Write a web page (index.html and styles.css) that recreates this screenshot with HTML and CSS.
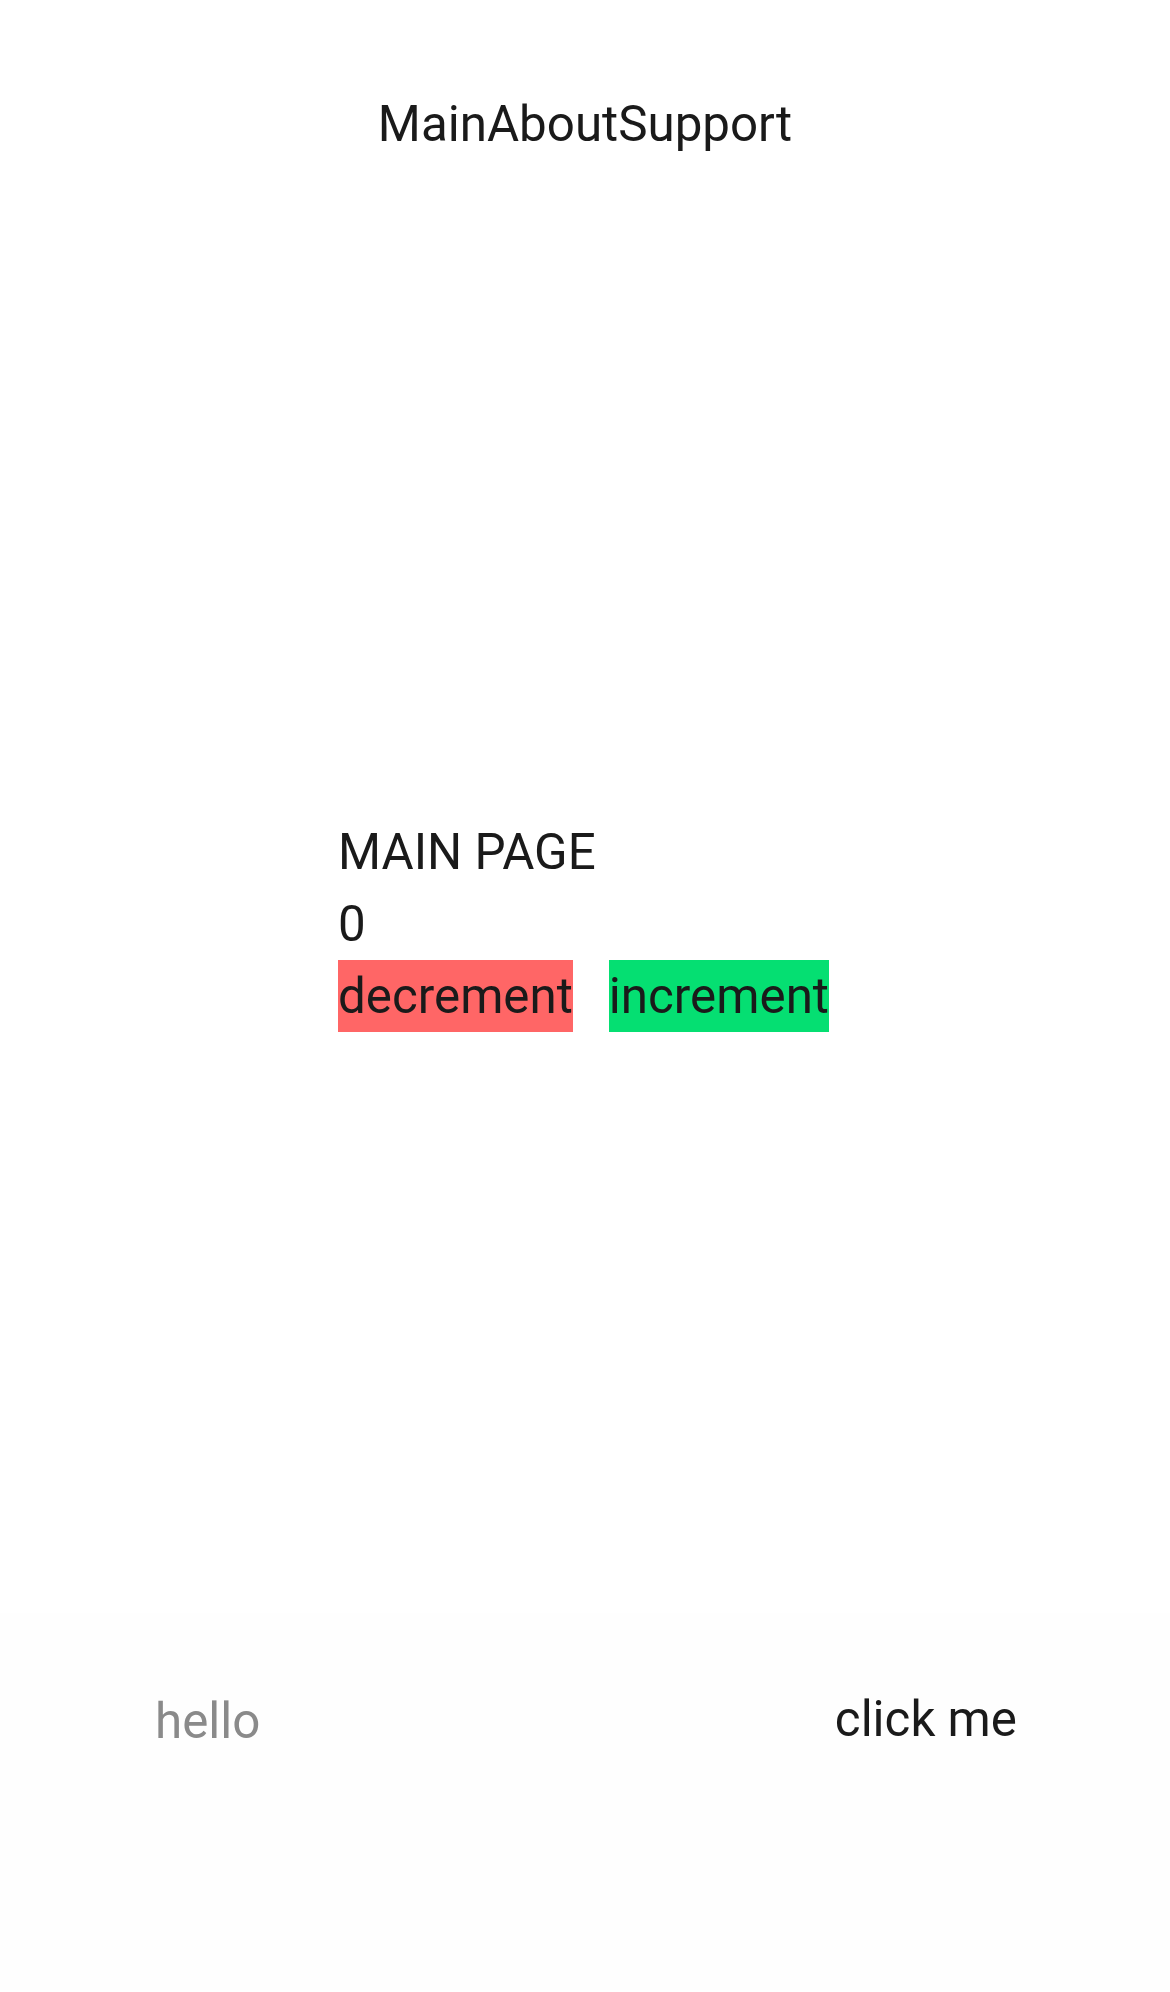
FILE: index.html
```html
<!DOCTYPE html>
<html lang="en">
<head>
<meta charset="utf-8">
<title>Main</title>
<link rel="stylesheet" href="styles.css">
</head>
<body>
<nav class="nav">
  <a class="nav-link" href="#">Main</a><a class="nav-link" href="#">About</a><a class="nav-link" href="#">Support</a>
</nav>
<main class="main">
  <div class="counter">
    <h1 class="title">MAIN PAGE</h1>
    <div class="count">0</div>
    <div class="actions">
      <button class="btn btn-dec" type="button">decrement</button>
      <button class="btn btn-inc" type="button">increment</button>
    </div>
  </div>
</main>
<footer class="footer">
  <input class="field" type="text" placeholder="hello">
  <button class="link-btn" type="button">click me</button>
</footer>
</body>
</html>
```

FILE: styles.css
```css
html, body {
  margin: 0;
  padding: 0;
  background: #ffffff;
}
body {
  font-family: Roboto, "Liberation Sans", Arial, sans-serif;
  font-size: 49.3px;
  line-height: 72px;
  color: #1a1a1a;
}
.nav {
  display: flex;
  justify-content: center;
  padding-top: 88px;
}
.nav-link {
  color: #1a1a1a;
  text-decoration: none;
}
.main {
  padding: 656px 0 581px 338px;
}
.title {
  margin: 0;
  font-size: inherit;
  font-weight: 400;
  line-height: 72px;
}
.count {
  line-height: 72px;
}
.actions {
  display: flex;
  gap: 36px;
}
.btn {
  font: inherit;
  line-height: 72px;
  color: #1a1a1a;
  border: 0;
  padding: 0;
  margin: 0;
  height: 72px;
}
.btn-dec { background: #ff6666; }
.btn-inc { background: #05df72; }
.footer {
  background: #fefefe;
  height: 377px;
  box-sizing: border-box;
  padding: 70px 153px 0 155px;
  display: flex;
  justify-content: space-between;
  align-items: flex-start;
}
.field {
  font: inherit;
  line-height: 72px;
  height: 72px;
  margin-top: 2px;
  border: 0;
  padding: 0;
  background: transparent;
  width: 400px;
  color: #1a1a1a;
  outline: none;
}
.field::placeholder {
  color: #8a8a8a;
}
.link-btn {
  font: inherit;
  line-height: 72px;
  height: 72px;
  border: 0;
  padding: 0;
  background: transparent;
  color: #1a1a1a;
}
```
